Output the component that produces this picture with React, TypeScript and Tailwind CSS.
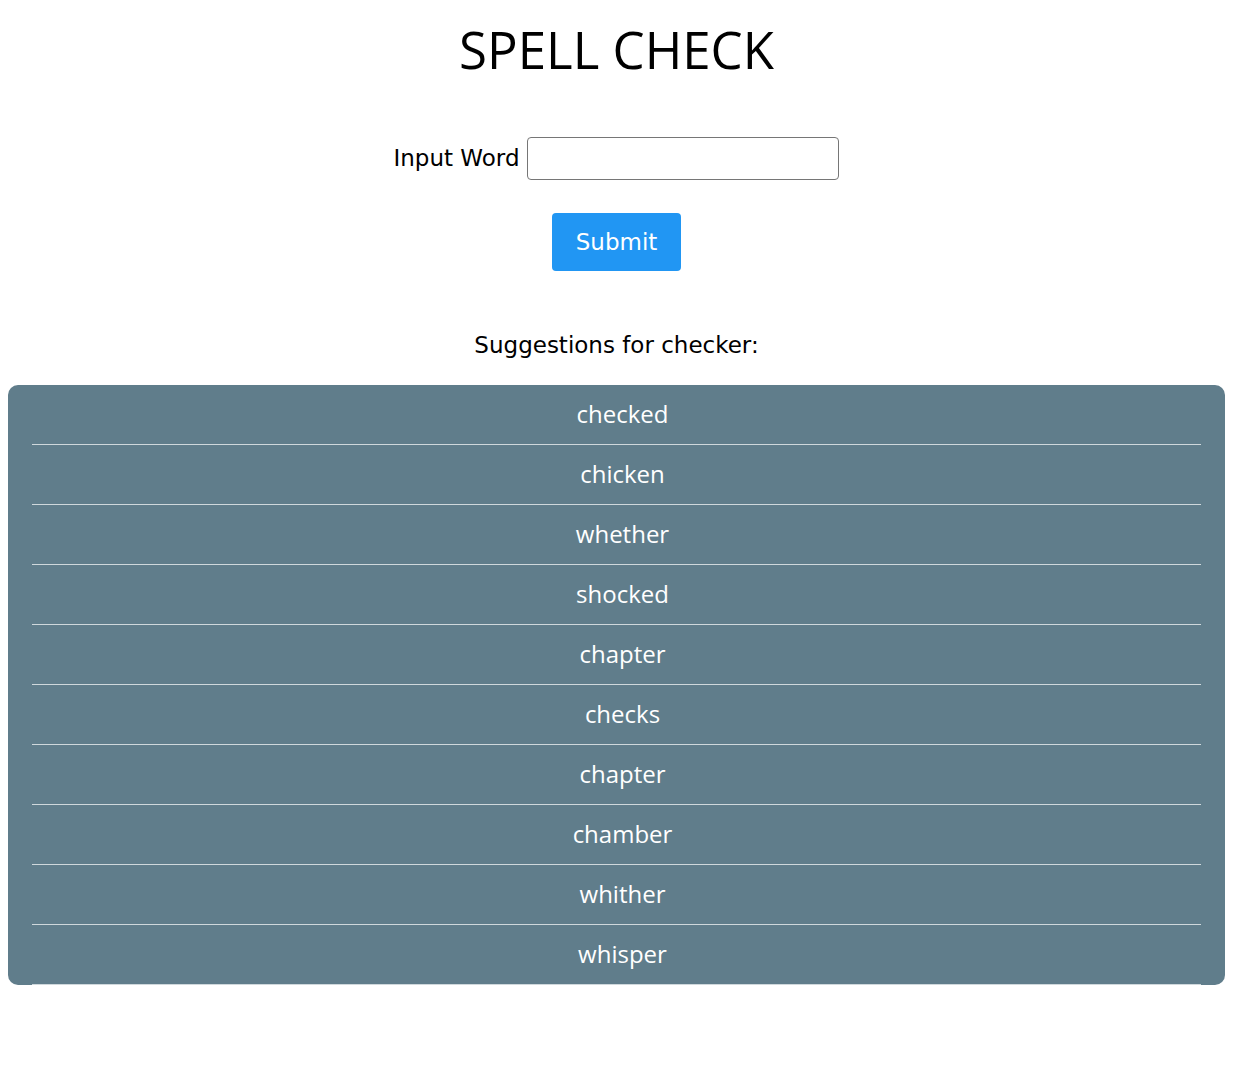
import React from "react";

const words = ["checked","chicken","whether","shocked","chapter","checks","chapter","chamber","whither","whisper"];

export default function App() {
  return (
    <div className="min-h-[1081px] bg-white pl-2 pr-[9px]">
      <h1 className="text-center text-[51px] leading-none pt-[24px] text-black" style={{fontFamily: '"Open Sans", sans-serif'}}>SPELL CHECK</h1>
      <div className="flex justify-center items-center mt-[62px] gap-2" style={{fontFamily: '"DejaVu Sans", sans-serif'}}>
        <label className="text-[23px] text-black">Input Word</label>
        <input className="w-[312px] h-[43px] border border-[#767676] rounded-[4px] px-2 text-[18px]" />
      </div>
      <div className="flex justify-center mt-[33px]">
        <button className="w-[129px] h-[58px] bg-[#2196f3] rounded-[4px] text-white text-[23px]" style={{fontFamily: '"DejaVu Sans", sans-serif'}}>Submit</button>
      </div>
      <p className="text-center text-[23px] text-black mt-[57px]" style={{fontFamily: '"DejaVu Sans", sans-serif'}}>Suggestions for checker:</p>
      <ul className="mt-[22px] bg-[#607d8b] rounded-[10px] px-6" style={{fontFamily: '"Open Sans", sans-serif'}}>
        {words.map((w, i) => (
          <li key={i} className="h-[60px] flex items-center justify-center border-b border-[#cfd8dc] text-white text-[24px] pl-3">{w}</li>
        ))}
      </ul>
    </div>
  );
}
